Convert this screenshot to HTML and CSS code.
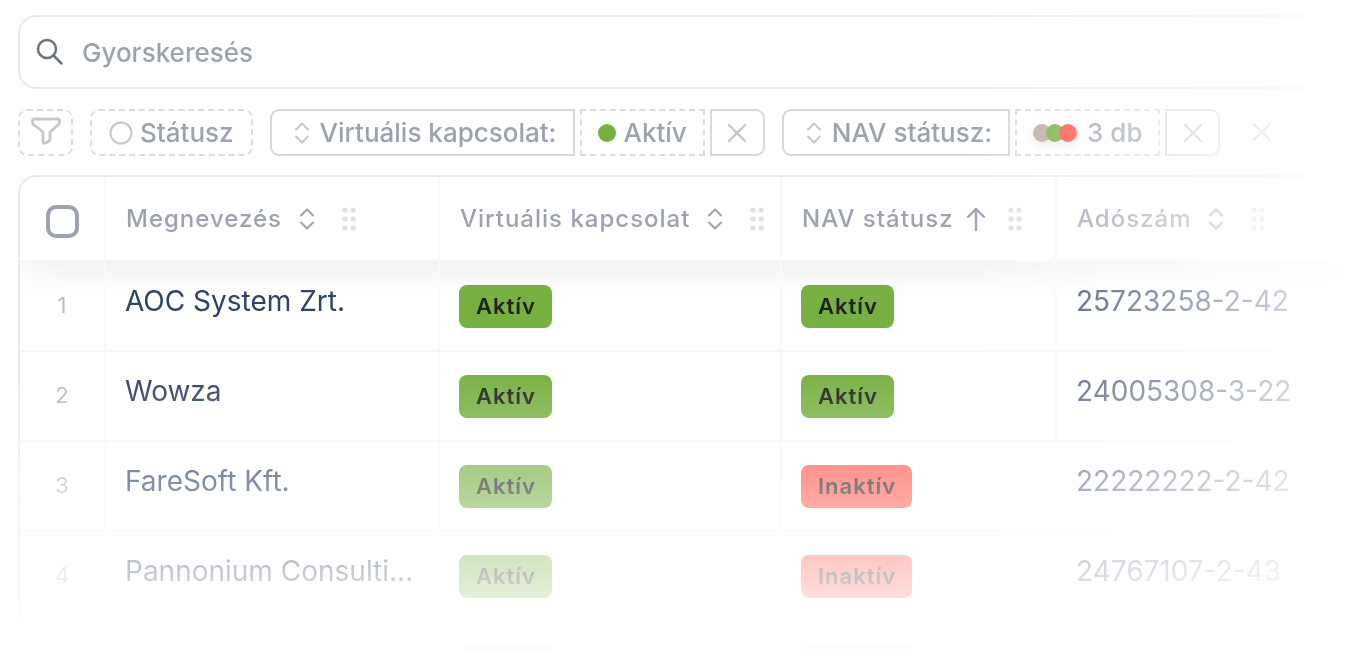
FILE: index.html
```
<!DOCTYPE html>
<html lang="hu">
<head>
    <meta charset="UTF-8">
    <title>Partnerek</title>
    <link rel="stylesheet" href="styles.css">
</head>
<body>
    <!-- Shared icons -->
    <svg class="sprite" aria-hidden="true">
        <symbol id="icon-sort" viewBox="0 0 16 22"><path d="M2 7.500l6-6 6 6M2 14.500l6 6 6-6"/></symbol>
        <symbol id="icon-close" viewBox="0 0 20 20"><path d="M2 2l16 16M18 2L2 18"/></symbol>
        <symbol id="icon-drag" viewBox="0 0 14 24">
            <circle cx="3" cy="3" r="2.600"/><circle cx="11" cy="3" r="2.600"/>
            <circle cx="3" cy="12" r="2.600"/><circle cx="11" cy="12" r="2.600"/>
            <circle cx="3" cy="21" r="2.600"/><circle cx="11" cy="21" r="2.600"/>
        </symbol>
    </svg>

    <main class="page">
        <label class="search">
            <svg class="search-icon" viewBox="0 0 28 28"><circle cx="11" cy="11" r="9"/><path d="M17.500 17.500l8 8"/></svg>
            <input type="search" placeholder="Gyorskeresés" aria-label="Gyorskeresés">
        </label>

        <div class="filters">
            <button class="chip dashed square" aria-label="Szűrők">
                <svg class="funnel" viewBox="0 0 30 32"><path d="M3.500 2h23c1.500 0 2 1 2 2v1.500c0 1-.5 1.500-1 2L19 15v7.500c0 1-.5 1.500-1.200 1.800l-4 1.900c-1 .4-1.800-.2-1.800-1.200V15L2.500 7.500c-.5-.5-1-1-1-2V4c0-1 .5-2 2-2z"/></svg>
            </button>
            <button class="chip dashed status">
                <svg class="ring" viewBox="0 0 24 24"><circle cx="12" cy="12" r="10.500"/></svg>
                Státusz
            </button>
            <div class="group">
                <button class="chip name first"><svg class="sort"><use href="#icon-sort"/></svg>Virtuális kapcsolat:</button>
                <button class="chip dashed value"><span class="dots"><i class="dot green"></i></span>Aktív</button>
                <button class="chip square last" aria-label="Törlés"><svg class="close"><use href="#icon-close"/></svg></button>
            </div>
            <div class="group">
                <button class="chip name first"><svg class="sort"><use href="#icon-sort"/></svg>NAV státusz:</button>
                <button class="chip dashed value"><span class="dots many"><i class="dot grey"></i><i class="dot green"></i><i class="dot red"></i></span>3 db</button>
                <button class="chip square last" aria-label="Törlés"><svg class="close"><use href="#icon-close"/></svg></button>
            </div>
            <button class="clear" aria-label="Összes szűrő törlése"><svg class="close"><use href="#icon-close"/></svg></button>
        </div>

        <div class="table-box">
            <table>
                <colgroup>
                    <col class="col-check"><col class="col-name"><col class="col-virtual"><col class="col-nav"><col>
                </colgroup>
                <thead>
                    <tr>
                        <th><input type="checkbox" aria-label="Összes kijelölése"></th>
                        <th><div class="head">Megnevezés<svg class="sort"><use href="#icon-sort"/></svg><svg class="drag"><use href="#icon-drag"/></svg></div></th>
                        <th><div class="head">Virtuális kapcsolat<svg class="sort"><use href="#icon-sort"/></svg><svg class="drag"><use href="#icon-drag"/></svg></div></th>
                        <th><div class="head sorted">NAV státusz<svg class="arrow" viewBox="0 0 20 24"><path d="M10 23V2M2 10l8-8 8 8"/></svg><svg class="drag"><use href="#icon-drag"/></svg></div></th>
                        <th><div class="head">Adószám<svg class="sort"><use href="#icon-sort"/></svg><svg class="drag"><use href="#icon-drag"/></svg></div></th>
                    </tr>
                </thead>
                <tbody>
                    <tr>
                        <td class="num">1</td>
                        <td class="text">AOC System Zrt.</td>
                        <td><span class="badge">Aktív</span></td>
                        <td><span class="badge">Aktív</span></td>
                        <td class="text">25723258-2-42</td>
                    </tr>
                    <tr>
                        <td class="num">2</td>
                        <td class="text">Wowza</td>
                        <td><span class="badge">Aktív</span></td>
                        <td><span class="badge">Aktív</span></td>
                        <td class="text">24005308-3-22</td>
                    </tr>
                    <tr>
                        <td class="num">3</td>
                        <td class="text">FareSoft Kft.</td>
                        <td><span class="badge">Aktív</span></td>
                        <td><span class="badge inactive">Inaktív</span></td>
                        <td class="text">22222222-2-42</td>
                    </tr>
                    <tr>
                        <td class="num">4</td>
                        <td class="text">Pannonium Consulti...</td>
                        <td><span class="badge">Aktív</span></td>
                        <td><span class="badge inactive">Inaktív</span></td>
                        <td class="text">24767107-2-43</td>
                    </tr>
                    <tr>
                        <td class="num"></td>
                        <td class="text"></td>
                        <td><span class="badge">Aktív</span></td>
                        <td><span class="badge inactive">Inaktív</span></td>
                        <td class="text"></td>
                    </tr>
                </tbody>
            </table>
        </div>
    </main>
</body>
</html>
```
FILE: styles.css
```
* {
    box-sizing: border-box;
}
body {
    margin: 0;
    background: white;
    font-family: Inter, sans-serif;
    color: #9ca3af;
}
svg {
    fill: none;
    stroke: currentColor;
    stroke-width: 2;
    stroke-linecap: round;
    stroke-linejoin: round;
    flex: none;
}
.sprite {
    display: none;
}
button {
    font: inherit;
    color: inherit;
    background: none;
    border: none;
    padding: 0;
    cursor: pointer;
}
/* content fades out to the right and to the bottom */
.page {
    height: 100vh;
    overflow: hidden;
    padding: 15px 0 0 18px;
    mask-image: linear-gradient(to right, #000 71%, transparent 103%), linear-gradient(to bottom, #000 56%, transparent 100%);
    mask-composite: intersect;
}
.search {
    display: flex;
    align-items: center;
    gap: 18px;
    height: 74px;
    padding-left: 16px;
    border: 2px solid #e8eaed;
    border-right: none;
    border-radius: 18px 0 0 18px;
}
.search-icon {
    width: 28px;
    height: 28px;
    color: #6b7280;
    stroke-width: 2.5;
}
.search input {
    flex: 1;
    border: none;
    outline: none;
    padding: 0;
    background: none;
    font: 500 26px Inter, sans-serif;
}
.search input::placeholder {
    color: #9ca3af;
}
.filters {
    display: flex;
    align-items: center;
    gap: 17px;
    margin: 20px 0 19px;
    font-size: 26px;
    font-weight: 500;
    white-space: nowrap;
}
.group {
    display: flex;
    gap: 5px;
}
.chip {
    display: flex;
    align-items: center;
    justify-content: center;
    height: 47px;
    border: 2px solid #d5d9df;
}
.chip.dashed {
    border-style: dashed;
    border-color: #d9dce1;
}
.chip.square {
    width: 55px;
}
.filters > .chip {
    border-radius: 9px;
}
.chip.first {
    border-radius: 9px 0 0 9px;
}
.chip.last {
    border-radius: 0 9px 9px 0;
}
.chip.status {
    padding: 0 17px;
    gap: 7px;
}
.chip.name {
    padding: 0 16px 0 22px;
    gap: 10px;
}
.chip.value {
    padding: 0 16px;
    gap: 8px;
}
.chip svg, .clear svg {
    color: #c4c7d0;
}
.chip .funnel {
    width: 30px;
    height: 32px;
    stroke-width: 2.8;
}
.ring {
    width: 24px;
    height: 24px;
}
.sort {
    width: 16px;
    height: 22px;
}
.close {
    width: 20px;
    height: 20px;
    stroke-width: 2.4;
}
.clear {
    width: 50px;
    height: 47px;
}
.dots {
    display: flex;
}
.many {
    margin-right: 2px;
    filter: drop-shadow(0 3px 5px rgba(0,0,0,0.1));
}
.dot {
    width: 18px;
    height: 18px;
    border-radius: 50%;
}
.dot + .dot {
    margin-left: -5px;
}
.green {
    background: #76b041;
}
.grey {
    background: #bcaaa4;
}
.red {
    background: #ff4d40;
}
.table-box {
    border: 2px solid #e8eaed;
    border-right: none;
    border-radius: 18px 0 0 0;
    overflow: hidden;
}
table {
    width: 100%;
    table-layout: fixed;
    border-collapse: separate;
    border-spacing: 0;
}
.col-check {
    width: 86px;
}
.col-name {
    width: 334px;
}
.col-virtual {
    width: 342px;
}
.col-nav {
    width: 275px;
}
thead {
    box-shadow: 0 20px 30px -6px rgba(0,0,0,0.06);
}
th, td {
    height: 90px;
    padding: 0 0 0 19px;
    border-right: 2px solid #f8f9fa;
    border-bottom: 2px solid #f5f6f7;
    text-align: left;
}
th {
    height: 85px;
    padding-left: 20px;
}
th:last-child, td:last-child {
    border-right: none;
}
th:first-child, td:first-child {
    padding: 0 0 3px;
    text-align: center;
}
.head {
    display: flex;
    align-items: center;
    gap: 17px;
    font-size: 24px;
    font-weight: 500;
    letter-spacing: 1px;
}
.head .drag {
    width: 14px;
    height: 24px;
    margin-left: 10px;
    fill: #dedfe4;
    stroke: none;
}
.head.sorted {
    gap: 12px;
}
.arrow {
    width: 20px;
    height: 24px;
    stroke-width: 2.4;
}
input[type="checkbox"] {
    appearance: none;
    display: block;
    width: 33px;
    height: 33px;
    margin: 8px auto 0;
    border: 4px solid #9ca3af;
    border-radius: 10px;
}
.num {
    font-size: 22px;
    color: #b4bccb;
}
td.text {
    padding-bottom: 10px;
    font-size: 28px;
    color: #2f4368;
    white-space: nowrap;
}
.badge {
    display: inline-block;
    height: 43px;
    padding: 0 16px 0 17px;
    border-radius: 8px;
    background: #76b041;
    color: #212121;
    font-size: 22px;
    font-weight: 600;
    letter-spacing: 1px;
    line-height: 43px;
    vertical-align: middle;
}
.badge.inactive {
    background: #ff5a4f;
}
```
